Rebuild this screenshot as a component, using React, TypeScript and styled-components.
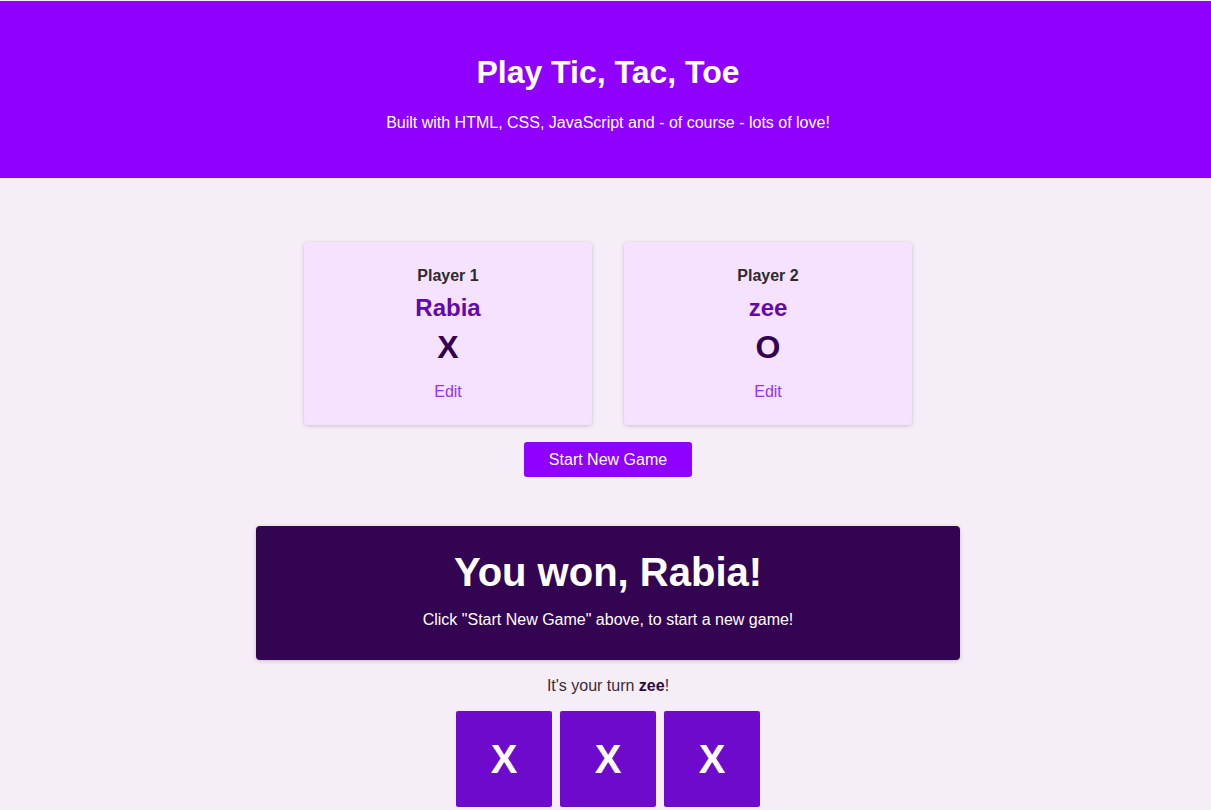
import React from "react";
import styled, { createGlobalStyle } from "styled-components";

const Global = createGlobalStyle`
  html, body { margin: 0; padding: 0; }
  body {
    background: #f6eef6;
    font-family: "Liberation Sans", Arial, sans-serif;
    color: #2e2e2e;
    overflow: hidden;
  }
  #root { padding-top: 1px; }
`;

const Header = styled.header`
  background: #8f00ff;
  color: #ffffff;
  text-align: center;
  padding: 53px 0 46px 5px;
`;

const Title = styled.h1`
  margin: 0;
  font-size: 32px;
  line-height: 37px;
  font-weight: bold;
`;

const Subtitle = styled.p`
  margin: 23px 0 0;
  font-size: 16px;
  line-height: 18px;
`;

const Main = styled.main`
  display: flex;
  flex-direction: column;
  align-items: center;
  padding: 64px 0 0 5px;
`;

const Players = styled.ol`
  list-style: none;
  margin: 0;
  padding: 0;
  display: flex;
  gap: 32px;
`;

const Card = styled.li`
  width: 288px;
  height: 183px;
  box-sizing: border-box;
  background: #f4e2fe;
  border-radius: 4px;
  box-shadow: 0 1px 4px rgba(0, 0, 0, 0.18);
  padding-top: 25px;
  display: flex;
  flex-direction: column;
  align-items: center;
`;

const PlayerLabel = styled.h2`
  margin: 0;
  font-size: 16px;
  line-height: 18px;
  font-weight: bold;
  color: #2e2a2e;
`;

const PlayerName = styled.div`
  margin-top: 9px;
  font-size: 24px;
  line-height: 28px;
  font-weight: bold;
  color: #6309a8;
`;

const Symbol = styled.div`
  margin-top: 7px;
  font-size: 32px;
  line-height: 37px;
  font-weight: bold;
  color: #33004f;
`;

const EditButton = styled.button`
  margin-top: 17px;
  background: none;
  border: none;
  padding: 0;
  font-family: inherit;
  font-size: 16px;
  line-height: 18px;
  color: #9b2ff5;
  cursor: pointer;
`;

const StartButton = styled.button`
  margin-top: 17px;
  height: 35px;
  width: 168px;
  border: none;
  border-radius: 3px;
  background: #8f00ff;
  color: #ffffff;
  font-family: inherit;
  font-size: 16px;
  cursor: pointer;
`;

const GameOver = styled.section`
  margin-top: 49px;
  width: 704px;
  height: 134px;
  box-sizing: border-box;
  background: #330452;
  border-radius: 4px;
  box-shadow: 0 1px 4px rgba(0, 0, 0, 0.2);
  color: #ffffff;
  text-align: center;
  padding-top: 23px;
`;

const GameOverTitle = styled.h2`
  margin: 0;
  font-size: 40px;
  line-height: 46px;
  font-weight: bold;
`;

const GameOverText = styled.p`
  margin: 16px 0 0;
  font-size: 16px;
  line-height: 18px;
`;

const Turn = styled.p`
  margin: 17px 0 0;
  font-size: 16px;
  line-height: 18px;
  color: #3a2a3a;
`;

const TurnName = styled.span`
  font-weight: bold;
  color: #2d0648;
`;

const Board = styled.ol`
  list-style: none;
  margin: 16px 0 0;
  padding: 0;
  display: grid;
  grid-template-columns: repeat(3, 96px);
  grid-auto-rows: 96px;
  gap: 8px;
`;

const Cell = styled.li`
  background: #6e0acc;
  border-radius: 2px;
  color: #ffffff;
  font-size: 40px;
  font-weight: bold;
  display: flex;
  align-items: center;
  justify-content: center;
`;

const cells = ["X", "X", "X", "", "", "", "", "", ""];

export default function App() {
  return (
    <>
      <Global />
      <Header>
        <Title>Play Tic, Tac, Toe</Title>
        <Subtitle>Built with HTML, CSS, JavaScript and - of course - lots of love!</Subtitle>
      </Header>
      <Main>
        <Players>
          <Card>
            <PlayerLabel>Player 1</PlayerLabel>
            <PlayerName>Rabia</PlayerName>
            <Symbol>X</Symbol>
            <EditButton>Edit</EditButton>
          </Card>
          <Card>
            <PlayerLabel>Player 2</PlayerLabel>
            <PlayerName>zee</PlayerName>
            <Symbol>O</Symbol>
            <EditButton>Edit</EditButton>
          </Card>
        </Players>
        <StartButton>Start New Game</StartButton>
        <GameOver>
          <GameOverTitle>You won, Rabia!</GameOverTitle>
          <GameOverText>Click "Start New Game" above, to start a new game!</GameOverText>
        </GameOver>
        <Turn>
          It's your turn <TurnName>zee</TurnName>!
        </Turn>
        <Board>
          {cells.map((c, i) => (
            <Cell key={i}>{c}</Cell>
          ))}
        </Board>
      </Main>
    </>
  );
}
